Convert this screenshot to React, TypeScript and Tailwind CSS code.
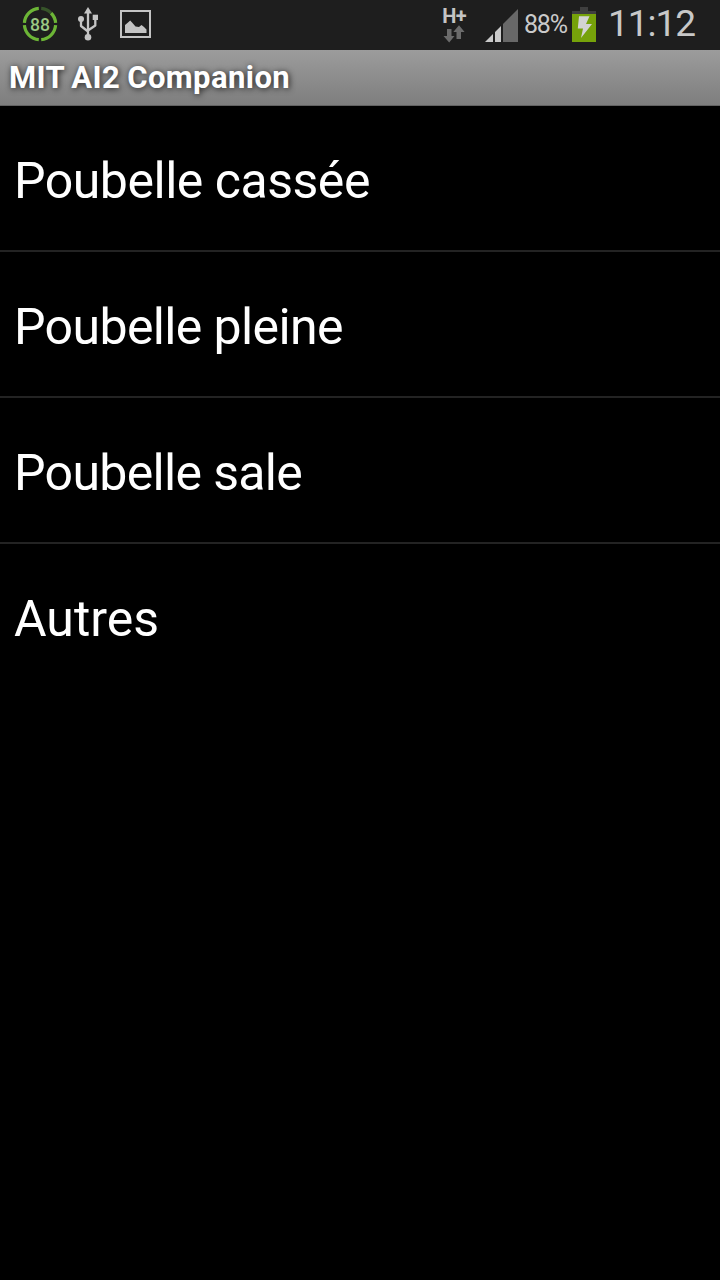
const items = [
  { label: "Poubelle cassée", tracking: "tracking-[-0.48px]" },
  { label: "Poubelle pleine", tracking: "tracking-[-0.62px]" },
  { label: "Poubelle sale", tracking: "tracking-[-0.66px]" },
  { label: "Autres", tracking: "tracking-normal" },
];

function BatteryRing() {
  return (
    <svg width="36" height="36" viewBox="0 0 36 36" className="ml-[22px]">
      <g fill="none" strokeWidth="3.2" transform="translate(18 18)">
        <path d="M-1.2 -15.6A15.6 15.6 0 0 0 -15.6 -1.2M-15.6 1.2A15.6 15.6 0 0 0 -1.2 15.6M1.2 15.6A15.6 15.6 0 0 0 15.6 1.2M15.6 -1.2A15.6 15.6 0 0 0 11 -11" stroke="#6cb536" />
        <path d="M11 -11A15.6 15.6 0 0 0 1.2 -15.6" stroke="#37542a" />
      </g>
      <text x="18" y="24.5" fontSize="19" fontWeight="500" textAnchor="middle" textLength="20" lengthAdjust="spacingAndGlyphs" fill="#9bc983">
        88
      </text>
    </svg>
  );
}

function UsbIcon() {
  return (
    <svg width="22" height="34" viewBox="0 0 22 34" className="ml-[19px]">
      <g fill="#c4c4c4">
        <path d="M11 0L15 6.5H7Z" />
        <circle cx="11" cy="30.2" r="3.3" />
        <circle cx="4" cy="12" r="3" />
        <path d="M15.7 7.7H21V13H15.7Z" />
      </g>
      <path d="M11 5V29M4 12V19L11 24.5M18.3 12V18.5L11 23.5" fill="none" stroke="#c4c4c4" strokeWidth="2.3" strokeLinejoin="round" />
    </svg>
  );
}

function PictureIcon() {
  return (
    <svg width="31" height="28" viewBox="0 0 31 28" className="ml-[21px]">
      <path d="M1 1H30V27H1Z" fill="none" stroke="#c4c4c4" strokeWidth="2" />
      <path d="M5 23V15L8 12.5L10.2 10.5L12.5 13L15.5 16.5L19 17L21.5 15L24 17L26.5 19.5V23Z" fill="#c4c4c4" />
    </svg>
  );
}

function NetworkIcon() {
  return (
    <div className="flex flex-col items-center">
      <span className="mt-[3px] block h-[15px] text-[20px] leading-[16px] font-bold tracking-[-0.6px] text-[#c4c4c4]">H+</span>
      <svg width="22" height="18" viewBox="0 0 22 18" className="mt-[2px]">
        <path d="M4 4H8.5V11H11.5L6.2 17.5L0.5 11H4ZM13.5 14V7H10.3L16 0.3L21.6 7H18V14Z" fill="#6b6b6b" />
      </svg>
    </div>
  );
}

function SignalIcon() {
  return (
    <svg width="33" height="34" viewBox="0 0 33 34" className="mt-[2px] ml-[19px]">
      <path d="M0 34L8 26V34ZM10 24L16 18V34H10Z" fill="#c9c9c9" />
      <path d="M18 16L33 1V34H18Z" fill="#686868" />
    </svg>
  );
}

function BatteryIcon() {
  return (
    <svg width="24" height="36" viewBox="0 0 24 36" className="mt-[2px]">
      <path d="M8 0H16V4H24V8H0V4H8Z" fill="#3f3f3f" />
      <path d="M0 7H24V35H0Z" fill="#76a20a" />
      <path d="M7 9.3H17.5L14 17H20L9 31L11 21.5H5.8Z" fill="#d3d3d3" />
    </svg>
  );
}

export default function App() {
  return (
    <main className="flex min-h-screen w-full flex-col bg-black font-['Roboto',sans-serif] whitespace-nowrap text-white">
      <header className="flex h-[50px] items-center justify-between bg-[#1e1e1e] pb-[2px]">
        <div className="flex items-center">
          <BatteryRing />
          <UsbIcon />
          <PictureIcon />
        </div>
        <div className="flex items-center">
          <NetworkIcon />
          <SignalIcon />
          <span className="ml-[6px] w-[48px] pt-[2px] text-[25px] leading-8 tracking-[-1.2px] text-[#cacaca]">88%</span>
          <BatteryIcon />
          <span className="ml-[12px] w-[112px] text-[37px] leading-10 tracking-[-1px] text-[#c8c8c8]">11:12</span>
        </div>
      </header>
      <div className="flex h-[56px] items-center border-b border-[#626262] bg-linear-to-b from-[#9c9c9c] to-[#7e7e7e] pl-[9px]">
        <h1 className="text-[31px] leading-10 font-bold tracking-[0.42px] [word-spacing:-1.2px] [text-shadow:1px_1px_6px_rgba(0,0,0,0.8)]">MIT AI2 Companion</h1>
      </div>
      <ul className="flex flex-col">
        {items.map(({ label, tracking }) => (
          <li key={label} className={`flex h-[146px] items-center border-b-2 border-[#232323] pt-[5px] pl-[14px] text-[50px] leading-[60px] last:border-transparent ${tracking}`}>
            {label}
          </li>
        ))}
      </ul>
    </main>
  );
}
